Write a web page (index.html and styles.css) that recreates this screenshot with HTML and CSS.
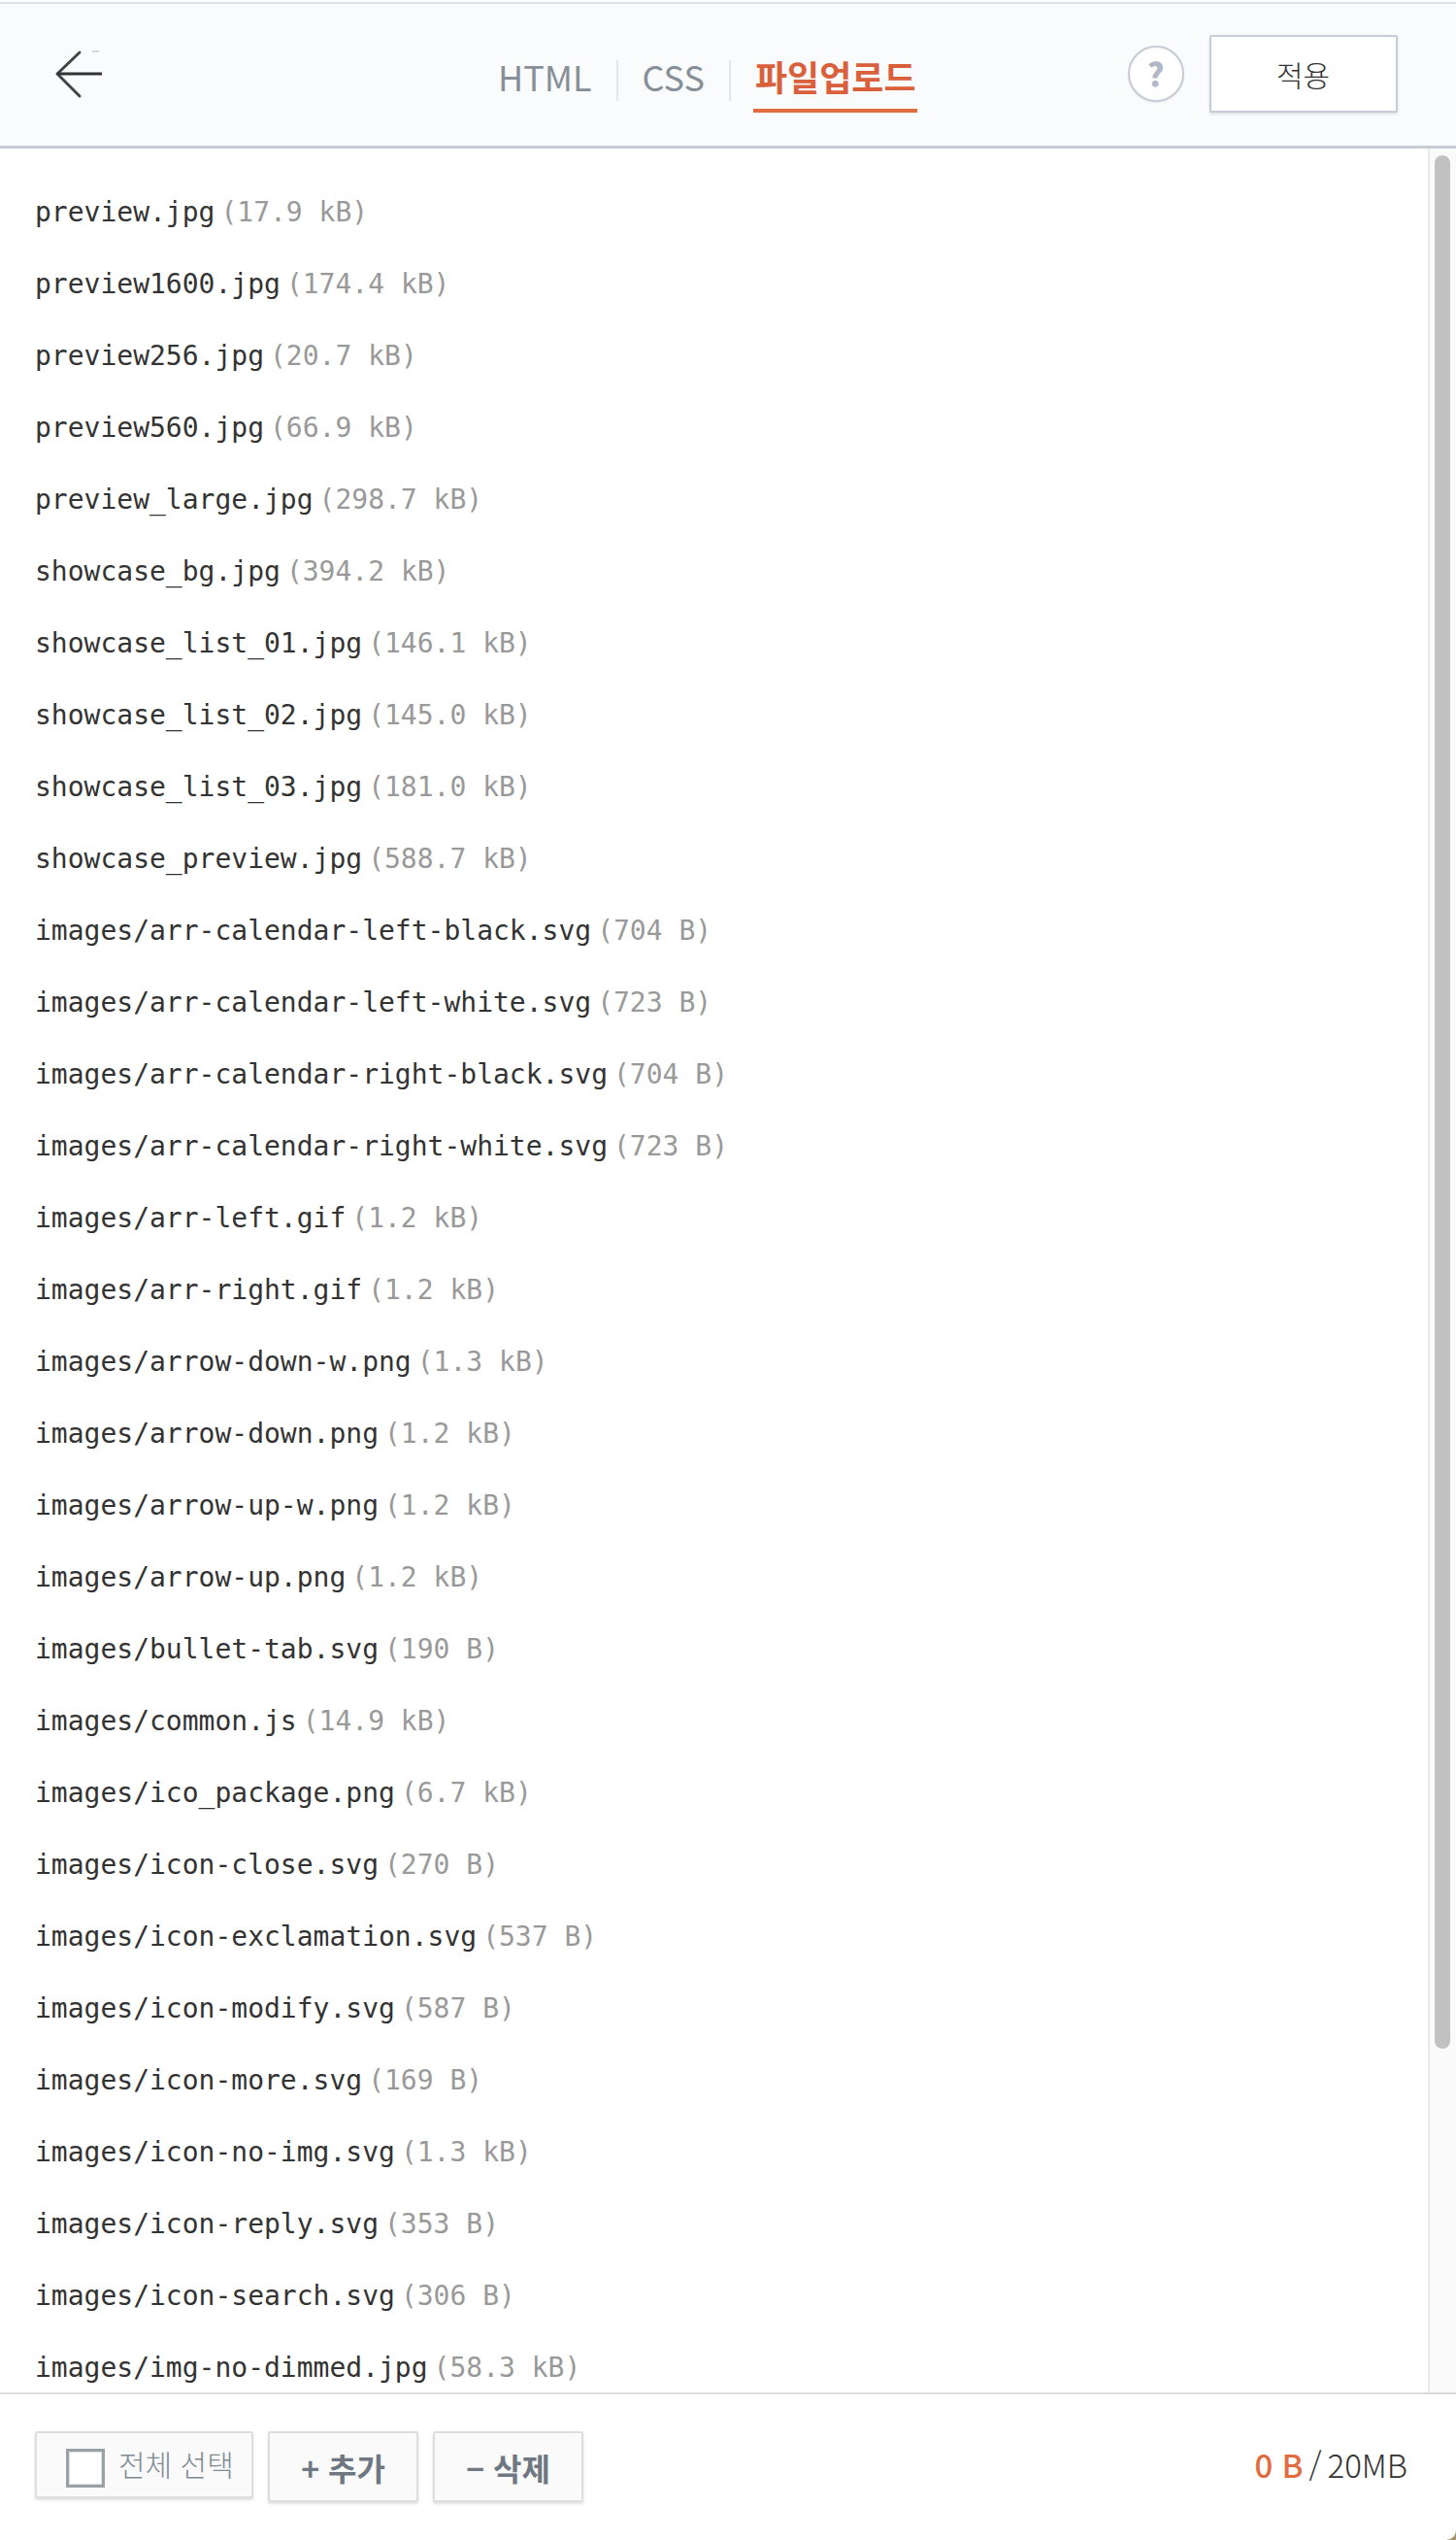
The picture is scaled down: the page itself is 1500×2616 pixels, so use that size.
FILE: index.html
```html
<!DOCTYPE html>
<html lang="ko">
<head>
<meta charset="utf-8">
<title>파일업로드</title>
<link rel="stylesheet" href="styles.css">
</head>
<body>
	<div id="page">
		<header class="top_bar">
			<a class="back_link" href="#" title="뒤로">
				<svg width="60" height="60" viewBox="0 0 60 60">
					<path d="M27 4 L4 26 L27 49" fill="none" stroke="#444" stroke-width="3" stroke-linecap="round" stroke-linejoin="round"/>
					<path d="M4 26 H50" fill="none" stroke="#333" stroke-width="3"/>
					<path d="M40 3 H47" fill="none" stroke="#c5c9d8" stroke-width="1.5"/>
				</svg>
			</a>
			<nav class="tabs">
				<a class="tab" href="#">HTML</a>
				<a class="tab" href="#">CSS</a>
				<a class="tab tab_active" href="#">파일업로드</a>
			</nav>
			<a class="help_btn" href="#">?</a>
			<button class="apply_btn" type="button">적용</button>
		</header>

		<div class="files">
			<ul class="file_list">
				<li>preview.jpg<span class="size">(17.9 kB)</span></li>
				<li>preview1600.jpg<span class="size">(174.4 kB)</span></li>
				<li>preview256.jpg<span class="size">(20.7 kB)</span></li>
				<li>preview560.jpg<span class="size">(66.9 kB)</span></li>
				<li>preview_large.jpg<span class="size">(298.7 kB)</span></li>
				<li>showcase_bg.jpg<span class="size">(394.2 kB)</span></li>
				<li>showcase_list_01.jpg<span class="size">(146.1 kB)</span></li>
				<li>showcase_list_02.jpg<span class="size">(145.0 kB)</span></li>
				<li>showcase_list_03.jpg<span class="size">(181.0 kB)</span></li>
				<li>showcase_preview.jpg<span class="size">(588.7 kB)</span></li>
				<li>images/arr-calendar-left-black.svg<span class="size">(704 B)</span></li>
				<li>images/arr-calendar-left-white.svg<span class="size">(723 B)</span></li>
				<li>images/arr-calendar-right-black.svg<span class="size">(704 B)</span></li>
				<li>images/arr-calendar-right-white.svg<span class="size">(723 B)</span></li>
				<li>images/arr-left.gif<span class="size">(1.2 kB)</span></li>
				<li>images/arr-right.gif<span class="size">(1.2 kB)</span></li>
				<li>images/arrow-down-w.png<span class="size">(1.3 kB)</span></li>
				<li>images/arrow-down.png<span class="size">(1.2 kB)</span></li>
				<li>images/arrow-up-w.png<span class="size">(1.2 kB)</span></li>
				<li>images/arrow-up.png<span class="size">(1.2 kB)</span></li>
				<li>images/bullet-tab.svg<span class="size">(190 B)</span></li>
				<li>images/common.js<span class="size">(14.9 kB)</span></li>
				<li>images/ico_package.png<span class="size">(6.7 kB)</span></li>
				<li>images/icon-close.svg<span class="size">(270 B)</span></li>
				<li>images/icon-exclamation.svg<span class="size">(537 B)</span></li>
				<li>images/icon-modify.svg<span class="size">(587 B)</span></li>
				<li>images/icon-more.svg<span class="size">(169 B)</span></li>
				<li>images/icon-no-img.svg<span class="size">(1.3 kB)</span></li>
				<li>images/icon-reply.svg<span class="size">(353 B)</span></li>
				<li>images/icon-search.svg<span class="size">(306 B)</span></li>
				<li>images/img-no-dimmed.jpg<span class="size">(58.3 kB)</span></li>
			</ul>
			<div class="scroll_track"><div class="scroll_thumb"></div></div>
		</div>

		<footer class="bottom_bar">
			<label class="btn btn_select"><span class="check_box"></span>전체 선택</label>
			<button class="btn btn_action" type="button">+ 추가</button>
			<button class="btn btn_action" type="button">− 삭제</button>
			<p class="total"><b>0 B</b><i>/</i>20MB</p>
		</footer>
	</div>
</body>
</html>
```
FILE: styles.css
```css
html, body {
	margin: 0;
	padding: 0;
	background: #fff;
}

#page {
	width: 1500px;
	height: 2616px;
	overflow: hidden;
	display: flex;
	flex-direction: column;
	font-family: "Noto Sans CJK KR", "Noto Sans", sans-serif;
	color: #333;
	/* visible only behind the rounded corner of the footer */
	background: #fff linear-gradient(#a8916e, #a8916e) no-repeat right bottom / 14px 14px;
}

.top_bar {
	height: 146px;
	margin-top: 2px;
	flex: none;
	display: flex;
	align-items: flex-start;
	background: #fafbfd;
	border-top: 2px solid #dfe1e6;
	border-bottom: 3px solid #c5ccd6;
}

.back_link {
	display: block;
	width: 60px;
	height: 60px;
	margin: 46px 0 0 55px;
}

.tabs {
	display: flex;
	align-items: center;
	height: 42px;
	margin: 58px 0 0 398px;
}

.tab {
	display: block;
	position: relative;
	height: 42px;
	font-size: 36px;
	font-weight: 400;
	line-height: 33px;
	color: #868f97;
	text-decoration: none;
	padding-right: 25px;
	margin-right: 25px;
	border-right: 2px solid #e4e6ea;
}

.tab_active {
	padding-right: 0;
	margin-right: 0;
	border-right: 0;
	font-weight: 700;
	color: #d9603b;
}

/* trait sous l'onglet actif */
.tab_active::after {
	content: "";
	position: absolute;
	left: -2px;
	right: -1px;
	top: 50px;
	height: 4px;
	background: #e06c3f;
}

.help_btn {
	display: block;
	box-sizing: border-box;
	width: 58px;
	height: 58px;
	margin: 43px 0 0 218px;
	border: 2px solid #c5ccd6;
	border-radius: 50%;
	background: #fff;
	box-shadow: 0 1px 2px rgba(0,0,0,0.08);
	font-size: 33px;
	font-weight: 900;
	line-height: 52px;
	text-align: center;
	color: #b0b7c6;
	text-decoration: none;
}

.apply_btn {
	box-sizing: border-box;
	width: 194px;
	height: 80px;
	margin: 32px 0 0 26px;
	padding: 0;
	border: 2px solid #c5ccd6;
	border-radius: 2px;
	background: #fff;
	box-shadow: 0 2px 3px rgba(0,0,0,0.1);
	font-family: inherit;
	font-size: 30px;
	font-weight: 300;
	color: #333;
}

.files {
	flex: 1;
	min-height: 0;
	display: flex;
	background: #fff;
}

.file_list {
	flex: 1;
	list-style: none;
	margin: 0;
	padding: 29px 0 0 36px;
	overflow: hidden;
}

.file_list li {
	height: 74px;
	line-height: 74px;
	font-family: "DejaVu Sans Mono", monospace;
	font-size: 28px;
	color: #333;
	white-space: nowrap;
}

.size {
	margin-left: 6px;
	color: #999;
}

.scroll_track {
	flex: none;
	width: 29px;
	box-sizing: border-box;
	border-left: 2px solid #e8e8e8;
	background: #fafafa;
}

.scroll_thumb {
	width: 16px;
	height: 1950px;
	margin: 7px 0 0 5px;
	border-radius: 8px;
	background: #c1c1c1;
}

.bottom_bar {
	flex: none;
	height: 152px;
	box-sizing: border-box;
	display: flex;
	align-items: flex-start;
	border-top: 2px solid #dcdce0;
	border-bottom-right-radius: 10px;
	background: #fff;
	padding: 38px 50px 0 36px;
}

.btn {
	box-sizing: border-box;
	height: 73px;
	padding: 0;
	border: 2px solid #dedede;
	border-radius: 2px;
	background: #fafafa;
	box-shadow: 0 2px 3px rgba(0,0,0,0.12);
	font-family: inherit;
}

.btn_select {
	width: 225px;
	height: 69px;
	display: flex;
	align-items: center;
	padding: 0 0 4px 30px;
	font-size: 30px;
	font-weight: 300;
	color: #7f8a93;
}

.check_box {
	box-sizing: border-box;
	width: 40px;
	height: 40px;
	margin: 11px 14px 0 0;
	border: 3px solid #9aa1a6;
	background: #fff;
	box-shadow: inset 0 0 0 1px #dfe2e3;
}

.btn_action {
	width: 155px;
	margin-left: 15px;
	font-size: 32px;
	font-weight: 700;
	color: #6f7882;
}

.total {
	margin: 0 0 0 auto;
	line-height: 69px;
	font-size: 33px;
	font-weight: 300;
	color: #333;
}

.total b {
	font-weight: 500;
	color: #e06c3f;
}

.total i {
	font-style: normal;
	margin: 0 6px;
}
```
